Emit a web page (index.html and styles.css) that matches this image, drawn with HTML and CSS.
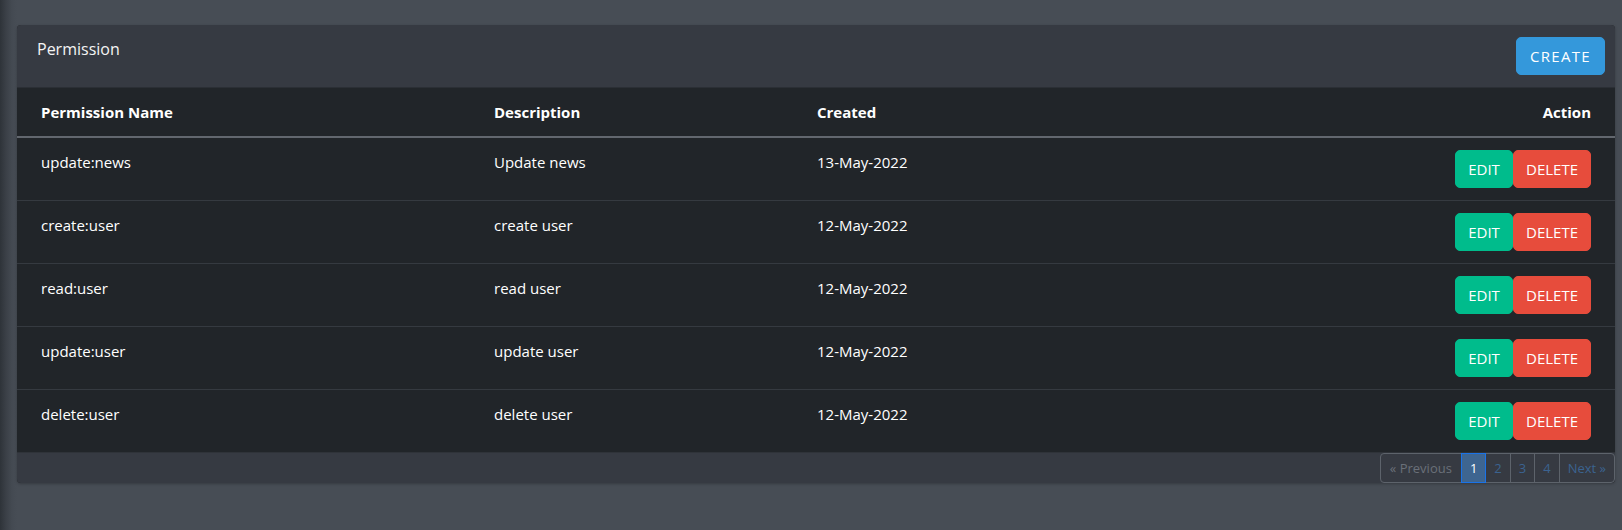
FILE: index.html
```html
<!DOCTYPE html>
<html lang="en">
<head>
<meta charset="utf-8">
<title>Permission</title>
<link rel="stylesheet" href="styles.css">
</head>
<body>
<div class="page">
  <div class="card">
    <div class="card-header">
      <div class="card-title">Permission</div>
      <button class="btn btn-create">CREATE</button>
    </div>
    <table class="table">
      <colgroup>
        <col class="c1"><col class="c2"><col class="c3"><col class="c4">
      </colgroup>
      <thead>
        <tr><th>Permission Name</th><th>Description</th><th>Created</th><th class="right">Action</th></tr>
      </thead>
      <tbody>
        <tr><td>update:news</td><td>Update news</td><td>13-May-2022</td><td class="right"><div class="actions"><button class="btn btn-edit">EDIT</button><button class="btn btn-delete">DELETE</button></div></td></tr>
        <tr><td>create:user</td><td>create user</td><td>12-May-2022</td><td class="right"><div class="actions"><button class="btn btn-edit">EDIT</button><button class="btn btn-delete">DELETE</button></div></td></tr>
        <tr><td>read:user</td><td>read user</td><td>12-May-2022</td><td class="right"><div class="actions"><button class="btn btn-edit">EDIT</button><button class="btn btn-delete">DELETE</button></div></td></tr>
        <tr><td>update:user</td><td>update user</td><td>12-May-2022</td><td class="right"><div class="actions"><button class="btn btn-edit">EDIT</button><button class="btn btn-delete">DELETE</button></div></td></tr>
        <tr><td>delete:user</td><td>delete user</td><td>12-May-2022</td><td class="right"><div class="actions"><button class="btn btn-edit">EDIT</button><button class="btn btn-delete">DELETE</button></div></td></tr>
      </tbody>
    </table>
    <div class="card-footer">
      <ul class="pagination">
        <li class="page-item disabled"><span class="page-link">« Previous</span></li>
        <li class="page-item active"><span class="page-link">1</span></li>
        <li class="page-item"><span class="page-link">2</span></li>
        <li class="page-item"><span class="page-link">3</span></li>
        <li class="page-item"><span class="page-link">4</span></li>
        <li class="page-item"><span class="page-link">Next »</span></li>
      </ul>
    </div>
  </div>
</div>
</body>
</html>
```

FILE: styles.css
```css
* { box-sizing: border-box; }
html, body { margin: 0; padding: 0; }
body {
  width: 1622px;
  height: 530px;
  overflow: hidden;
  font-family: "Open Sans", "Noto Sans", sans-serif;
  font-size: 15px;
  color: #fff;
  background: linear-gradient(to right, #2e3339 0px, #3b4047 6px, #444a52 12px, #474d55 17px);
}
.page {
  padding: 25px 7px 0 17px;
}
.card {
  background: #212529;
  border-radius: 4px;
  overflow: hidden;
  box-shadow: 0 1px 3px rgba(0,0,0,0.25);
}
.card-header {
  background: #363a42;
  display: flex;
  justify-content: space-between;
  align-items: flex-start;
  padding: 12px 10px 12px 20px;
  border-bottom: 1px solid #2b2f35;
}
.card-title {
  font-size: 16px;
  line-height: 24px;
  color: #f4f4f4;
}
.btn {
  font-family: "Open Sans", "Noto Sans", sans-serif;
  font-size: 15px;
  line-height: 24px;
  padding: 6px 12px;
  border: 1px solid transparent;
  border-radius: 5px;
  color: #fff;
  cursor: pointer;
}
.btn-create {
  background: #3498db;
  border-color: #3498db;
  letter-spacing: 1.3px;
  padding: 6px 13px;
  height: 38px;
  width: 89px;
}
.btn-edit {
  background: #00bc8c;
  border-color: #00bc8c;
  width: 58px;
  padding: 6px 0;
}
.btn-delete {
  background: #e74c3c;
  border-color: #e74c3c;
  width: 78px;
  padding: 6px 0;
}
.table {
  width: 100%;
  border-collapse: collapse;
  table-layout: fixed;
}
.c1 { width: 453px; }
.c2 { width: 323px; }
.c4 { width: 300px; }
.table th, .table td {
  padding: 12px 24px;
  line-height: 24px;
  text-align: left;
  vertical-align: top;
  white-space: nowrap;
}
.table th {
  font-weight: 700;
  border-bottom: 2px solid #62676e;
}
.table td {
  border-top: 1px solid #353a40;
}
.table tbody tr:first-child td { border-top: none; }
.table .right { text-align: right; }
.actions {
  display: inline-flex;
}
.card-footer {
  background: #363a42;
  border-top: 1px solid #2f3339;
  display: flex;
  justify-content: flex-end;
  height: 31px;
}
.pagination {
  list-style: none;
  margin: 0;
  padding: 0;
  display: flex;
  font-size: 13px;
  line-height: 20px;
}
.page-link {
  display: block;
  padding: 4px 8px;
  border: 1px solid #5d636b;
  margin-left: -1px;
  color: #3b6390;
}
.page-item:first-child .page-link {
  margin-left: 0;
  border-radius: 4px 0 0 4px;
  padding: 4px 9px;
}
.page-item:last-child .page-link {
  border-radius: 0 4px 4px 0;
}
.page-item.disabled .page-link {
  color: #6a7079;
}
.page-item.active .page-link {
  background: #3e6590;
  border-color: #1a73e8;
  color: #fff;
  position: relative;
  z-index: 1;
}
```
